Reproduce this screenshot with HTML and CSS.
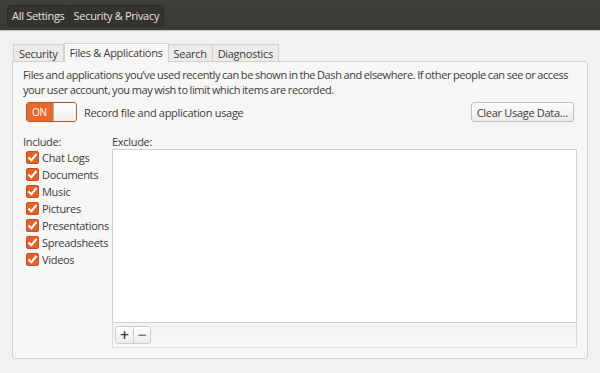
FILE: index.html
```html
<!DOCTYPE html>
<html lang="en">
<head>
    <meta charset="UTF-8">
    <title>Security &amp; Privacy</title>
    <link rel="stylesheet" href="styles.css">
</head>
<body>
    <!-- Header bar -->
    <div class="header">
        <div class="crumbs">
            <button class="crumb">All Settings</button>
            <button class="crumb">Security &amp; Privacy</button>
        </div>
    </div>

    <div class="content">
        <div class="tabs">
            <div class="tab">Security</div>
            <div class="tab active">Files &amp; Applications</div>
            <div class="tab">Search</div>
            <div class="tab">Diagnostics</div>
        </div>

        <div class="panel">
            <p class="intro">Files and applications you’ve used recently can be shown in the Dash and elsewhere. If other people can see or access your user account, you may wish to limit which items are recorded.</p>

            <div class="record-row">
                <div class="switch">
                    <span class="switch-on">ON</span>
                    <span class="switch-knob"></span>
                </div>
                <span class="record-label">Record file and application usage</span>
                <button class="btn btn-clear">Clear Usage Data…</button>
            </div>

            <div class="lists">
                <div class="include">
                    <div class="list-title">Include:</div>
                    <label class="check"><span class="box"></span>Chat Logs</label>
                    <label class="check"><span class="box"></span>Documents</label>
                    <label class="check"><span class="box"></span>Music</label>
                    <label class="check"><span class="box"></span>Pictures</label>
                    <label class="check"><span class="box"></span>Presentations</label>
                    <label class="check"><span class="box"></span>Spreadsheets</label>
                    <label class="check"><span class="box"></span>Videos</label>
                </div>
                <div class="exclude">
                    <div class="list-title">Exclude:</div>
                    <div class="exclude-list"></div>
                    <div class="toolbar">
                        <div class="tool-group">
                            <button class="tool">+</button>
                            <button class="tool">−</button>
                        </div>
                    </div>
                </div>
            </div>
        </div>
    </div>
</body>
</html>
```

FILE: styles.css
```css
body {
    margin: 0;
    font-family: "Open Sans", "DejaVu Sans", sans-serif;
    font-size: 11px;
    letter-spacing: -0.3px;
    color: #3c3c3c;
    background-color: #f2f1f0;
    width: 600px;
    height: 373px;
    overflow: hidden;
}
button {
    letter-spacing: -0.3px;
}
.header {
    height: 31px;
    background: linear-gradient(#3f3e3a, #3a3934);
    border-bottom: 1px solid #c9c7c3;
    box-sizing: border-box;
    padding: 5px 0 0 7px;
}
.crumbs {
    display: inline-flex;
    background-color: #34332f;
    border: 1px solid #2b2a27;
    border-radius: 3px;
}
.crumb {
    background: none;
    border: none;
    color: #e4e2dd;
    font-family: inherit;
    font-size: 11px;
    padding: 0 4px 1px;
    height: 20px;
}
.crumb + .crumb {
    border-left: 1px solid #2b2a27;
}
.content {
    padding: 12px 12px 0 12px;
}
.tabs {
    display: flex;
    padding-left: 1px;
    height: 18px;
    align-items: flex-end;
}
.tab {
    height: 17px;
    box-sizing: border-box;
    padding: 1px 5px 0;
    border: 1px solid #d3d1cd;
    border-bottom: none;
    border-left: none;
    background-color: #ecebe9;
    color: #3c3c3c;
}
.tab:first-child {
    border-left: 1px solid #d3d1cd;
}
.tab.active {
    height: 19px;
    background-color: #f6f6f5;
    border-left: 1px solid #d3d1cd;
    margin-bottom: -1px;
    position: relative;
    padding-top: 1px;
}
.panel {
    height: 298px;
    box-sizing: border-box;
    background-color: #f6f6f5;
    border: 1px solid #d3d1cd;
    border-radius: 0 3px 3px 3px;
    padding: 5px 10px 0 10px;
}
.intro {
    margin: 0;
    width: 552px;
    line-height: 15px;
    letter-spacing: -0.4px;
    word-spacing: -0.5px;
}
.record-row {
    display: flex;
    align-items: center;
    margin-top: 5px;
    padding-left: 3px;
}
.switch {
    display: flex;
    width: 51px;
    height: 20px;
    box-sizing: border-box;
    border: 1px solid #b9572b;
    border-radius: 3px;
    overflow: hidden;
}
.switch-on {
    width: 26px;
    background-color: #e9692c;
    color: #fff;
    font-size: 10px;
    line-height: 18px;
    padding-left: 5px;
    box-sizing: border-box;
}
.switch-knob {
    flex: 1;
    background: linear-gradient(#ffffff, #efeeec);
    border-left: 1px solid #b5b3ae;
}
.record-label {
    margin-left: 7px;
}
.btn-clear {
    margin-left: auto;
    margin-right: 3px;
    font-family: inherit;
    font-size: 11px;
    color: #3c3c3c;
    height: 20px;
    padding: 0 5px;
    border: 1px solid #c0beba;
    border-radius: 3px;
    background: linear-gradient(#fbfbfa, #eeedeb);
}
.lists {
    display: flex;
    margin-top: 12px;
}
.include {
    width: 89px;
}
.list-title {
    line-height: 15px;
    height: 15px;
}
.check {
    display: flex;
    align-items: center;
    height: 17px;
    padding-left: 3px;
}
.box {
    width: 13px;
    height: 13px;
    box-sizing: border-box;
    margin-right: 3px;
    border-radius: 2px;
    background-color: #e3622a;
    border: 1px solid #c2501f;
    position: relative;
}
.box::after {
    content: "";
    position: absolute;
    left: 3px;
    top: 0px;
    width: 3px;
    height: 7px;
    border: solid #fff;
    border-width: 0 2px 2px 0;
    transform: rotate(40deg);
}
.exclude {
    flex: 1;
}
.exclude-list {
    height: 174px;
    background-color: #fff;
    border: 1px solid #d3d1cd;
    box-sizing: border-box;
}
.toolbar {
    height: 25px;
    box-sizing: border-box;
    border: 1px solid #dddbd8;
    border-top: none;
    background: linear-gradient(#f3f3f2, #f8f8f7);
    padding: 3px 0 0 2px;
}
.tool-group {
    display: inline-flex;
    border: 1px solid #cfcdc9;
    border-radius: 3px;
    overflow: hidden;
}
.tool {
    width: 17px;
    height: 16px;
    padding: 0;
    border: none;
    background: linear-gradient(#fdfdfd, #efeeec);
    font-family: "DejaVu Sans", sans-serif;
    font-size: 12px;
    font-weight: bold;
    line-height: 14px;
    color: #3c3c3c;
}
.tool + .tool {
    border-left: 1px solid #cfcdc9;
    color: #777;
}
```
